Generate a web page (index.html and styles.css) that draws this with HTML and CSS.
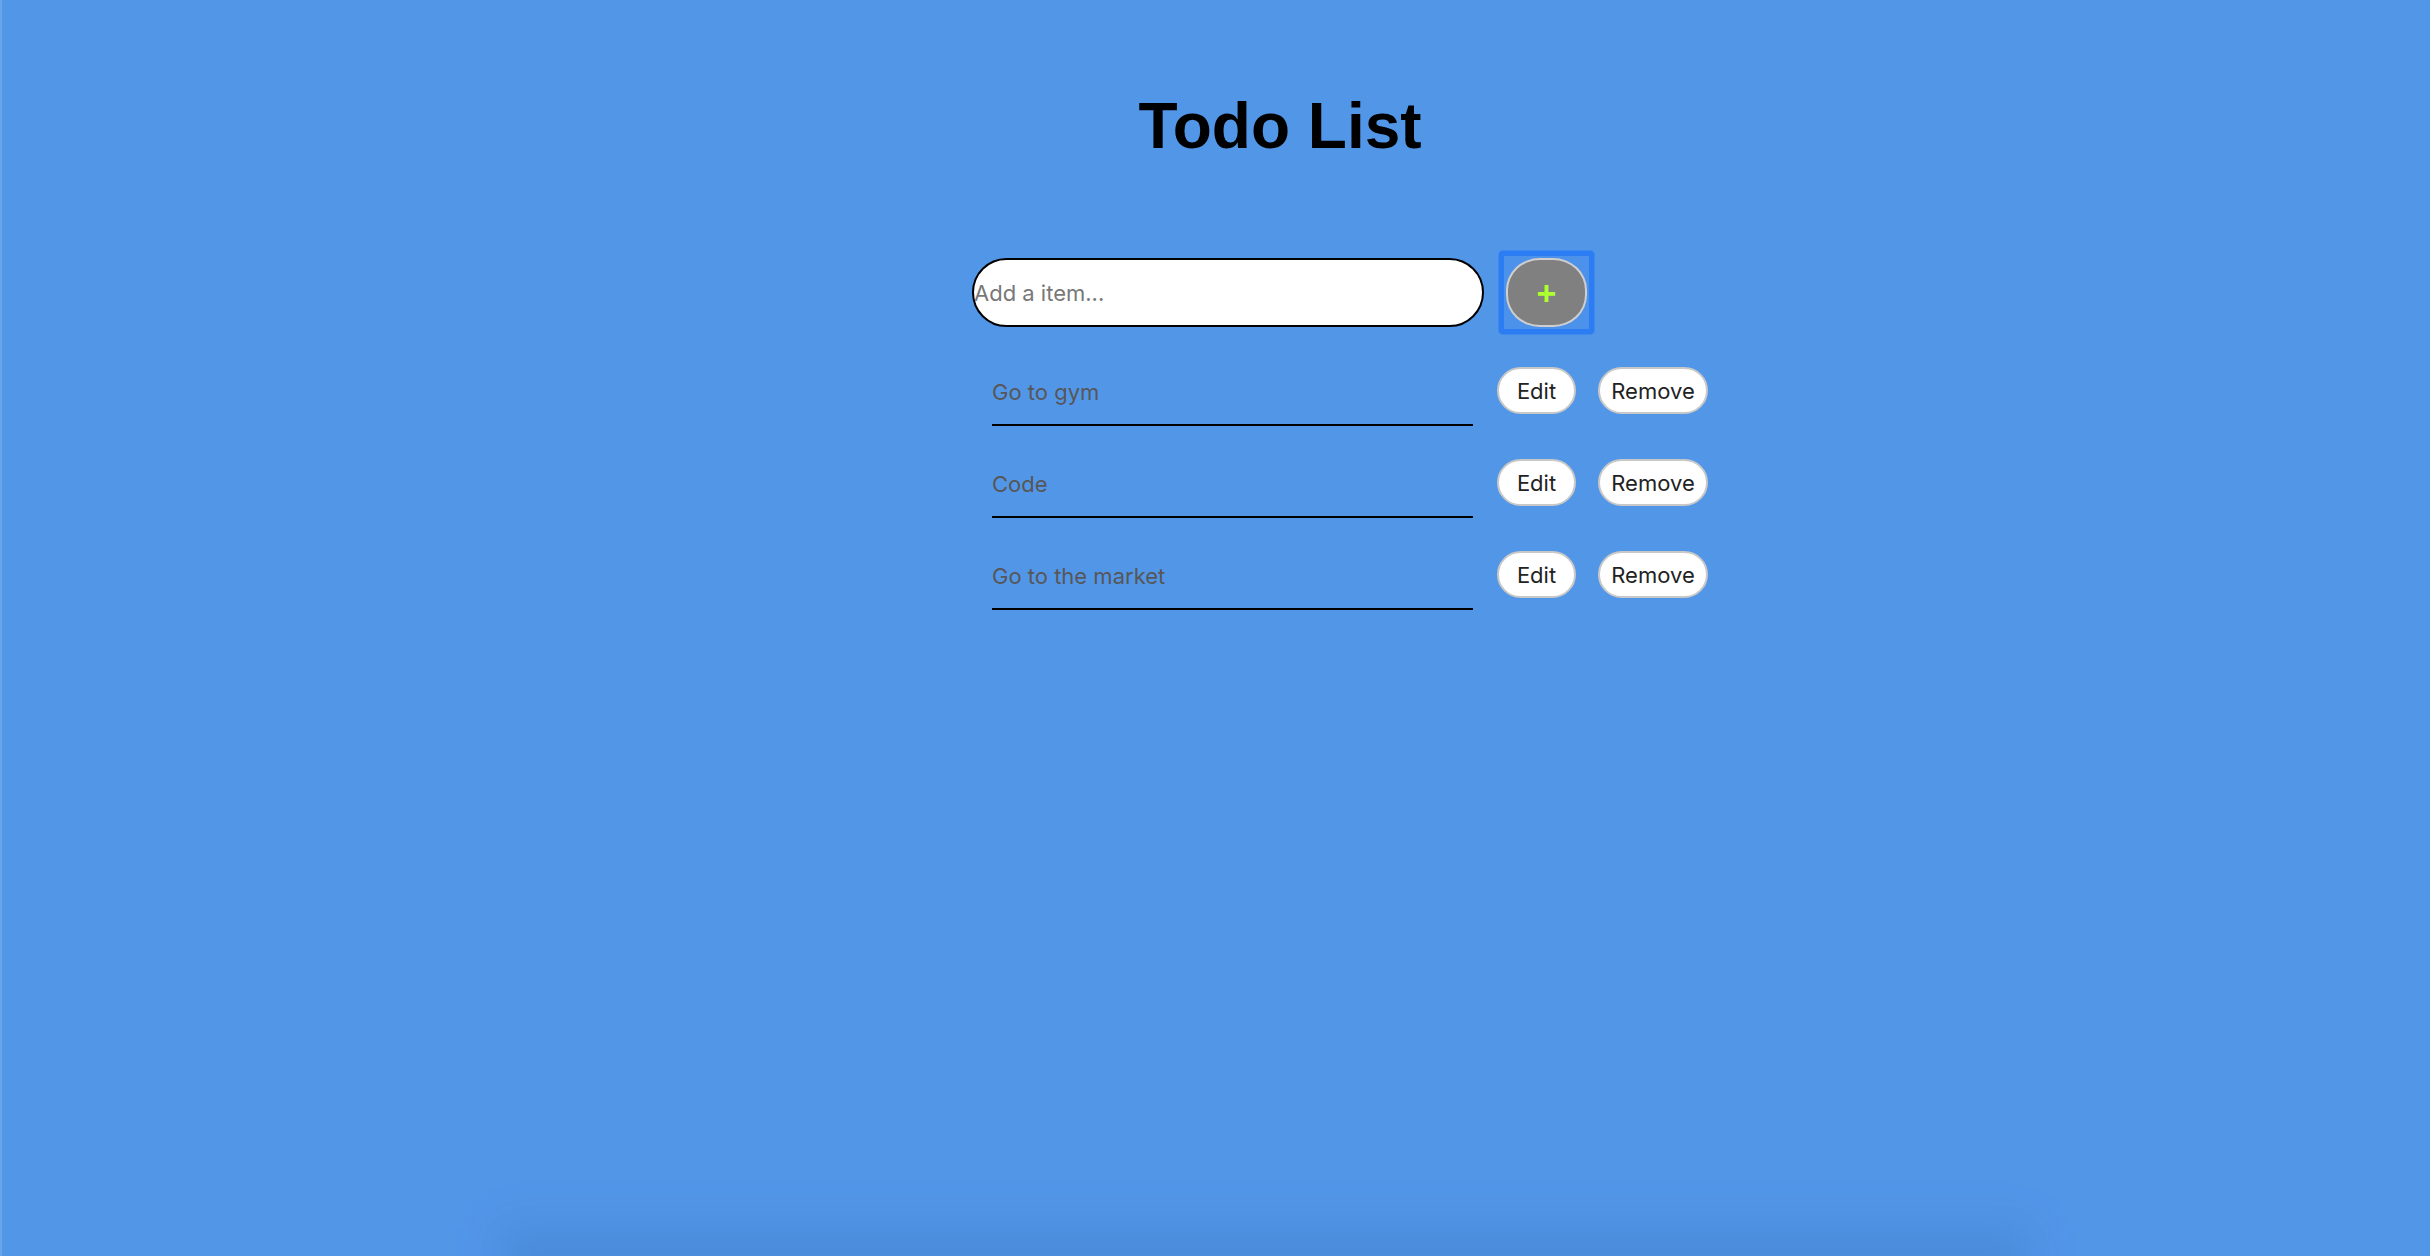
FILE: index.html
```html
<!DOCTYPE html>
<html lang="en">
<head>
<meta charset="utf-8">
<title>Todo List</title>
<link rel="stylesheet" href="styles.css">
</head>
<body>
  <main class="app">
    <div class="head">
      <h1 class="title">Todo List</h1>
      <form class="add-row" onsubmit="return false">
        <input class="add-input" type="text" placeholder="Add a item...">
        <span class="add-ring"><button class="add-btn" type="button">+</button></span>
      </form>
    </div>
    <ul class="items">
      <li class="item">
        <input class="item-text" type="text" value="Go to gym" readonly>
        <button class="pill edit" type="button">Edit</button>
        <button class="pill remove" type="button">Remove</button>
      </li>
      <li class="item">
        <input class="item-text" type="text" value="Code" readonly>
        <button class="pill edit" type="button">Edit</button>
        <button class="pill remove" type="button">Remove</button>
      </li>
      <li class="item">
        <input class="item-text" type="text" value="Go to the market" readonly>
        <button class="pill edit" type="button">Edit</button>
        <button class="pill remove" type="button">Remove</button>
      </li>
    </ul>
  </main>
</body>
</html>
```
FILE: styles.css
```css
html, body {
  margin: 0;
  padding: 0;
}
body {
  min-height: 100vh;
  background: #5296e8;
  box-shadow: inset 2px 0 0 rgba(255, 255, 255, 0.14);
  font-family: Inter, "Noto Sans", "Liberation Sans", sans-serif;
  overflow: hidden;
}
body::after {
  content: "";
  position: fixed;
  left: 500px;
  right: 400px;
  bottom: -40px;
  height: 70px;
  background: rgba(40, 80, 150, 0.16);
  filter: blur(22px);
  pointer-events: none;
}
.app {
  padding-left: 40%;
  padding-top: 89px;
}
.head {
  width: 616px;
}
.title {
  margin: 0;
  text-align: center;
  font-family: "Liberation Sans", Arial, sans-serif;
  font-weight: 700;
  font-size: 64px;
  line-height: 74px;
  color: #000;
}
.add-row {
  margin: 88px 0 0;
  display: flex;
  align-items: center;
  gap: 15px;
}
.add-input {
  flex: none;
  box-sizing: border-box;
  width: 512px;
  height: 69px;
  margin: 0;
  padding: 0;
  border: 2px solid #000;
  border-radius: 35px;
  background: #fff;
  font-family: Inter, "Noto Sans", sans-serif;
  font-size: 22px;
  color: #222;
  outline: none;
}
.add-input::placeholder {
  color: #787878;
}
.add-ring {
  flex: none;
  display: flex;
  padding: 2px;
  border: 5px solid #2c7cf4;
  border-radius: 4px;
  background: #4d92ea;
  box-shadow: 0 0 0 1px rgba(44, 124, 244, 0.45);
}
.add-btn {
  box-sizing: border-box;
  width: 81px;
  height: 69px;
  margin: 0;
  padding: 0;
  border: 2px solid #cfcfcf;
  border-radius: 34px / 32px;
  background: #808080;
  color: #adff2f;
  font-family: "Liberation Sans", Arial, sans-serif;
  font-weight: 700;
  font-size: 34px;
  line-height: 1;
  cursor: pointer;
}
.items {
  list-style: none;
  margin: 32px 0 0;
  padding: 0;
  display: flex;
  flex-direction: column;
  gap: 32px;
}
.item {
  display: flex;
  align-items: flex-start;
}
.item-text {
  flex: none;
  box-sizing: border-box;
  width: 481px;
  height: 60px;
  margin: 0 0 0 20px;
  padding: 11px 0 17px;
  border: 0;
  border-bottom: 2px solid #000;
  background: transparent;
  font-family: Inter, "Noto Sans", sans-serif;
  font-size: 22px;
  line-height: 30px;
  color: #575757;
  outline: none;
}
.pill {
  flex: none;
  box-sizing: border-box;
  height: 47px;
  margin: 1px 0 0;
  padding: 0;
  border: 2px solid #c8c8c8;
  border-radius: 24px;
  background: #fff;
  font-family: Inter, "Noto Sans", sans-serif;
  font-size: 22px;
  color: #222;
  cursor: pointer;
}
.edit {
  width: 79px;
  margin-left: 24px;
}
.remove {
  width: 110px;
  margin-left: 22px;
}
```
